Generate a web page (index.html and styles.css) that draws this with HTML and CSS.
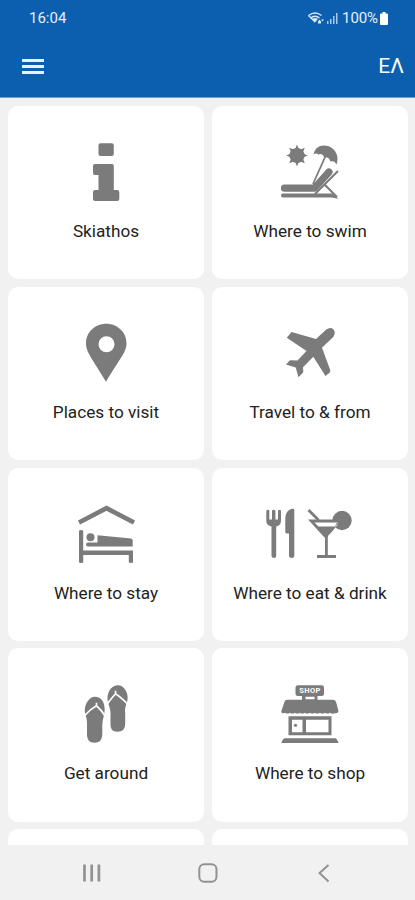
FILE: index.html
```html
<!DOCTYPE html>
<html lang="en">
<head>
<meta charset="utf-8">
<title>Skiathos</title>
<link rel="stylesheet" href="styles.css">
</head>
<body>
<div class="phone">
  <header class="header">
    <div class="status">
      <span class="time">16:04</span>
      <span class="indicators">
        <svg class="signal" viewBox="306 9 32 16">
          <g fill="none" stroke="#dbe9f8" stroke-width="1.300"><path d="M307.500 14.500Q314 9.500 320.500 14.500M309.500 17Q314 13.500 318.500 17"/><path d="M307.500 14.500L314 21"/></g>
          <path d="M311 18Q314 16 317 18L314 21.500Z" fill="#dbe9f8"/>
          <path d="M317 20.500l1.500-2 1.500 2v2h-3zM320 18.500h3l-1.500 2z" fill="#dbe9f8"/>
          <path d="M326 20h1.500v3H326zM329 18h1.500v5H329zM332 15h1.500v8H332zM335 12h1.500v11H335z" fill="#a9c9eb"/>
        </svg>
        <span class="percent">100%</span>
        <svg class="battery" viewBox="0 0 8 13"><path d="M2.500 0h3v1.500H7q1 0 1 1V12q0 1-1 1H1q-1 0-1-1V2.500q0-1 1-1h1.500z" fill="#fff"/></svg>
      </span>
    </div>
    <nav class="toolbar">
      <span class="menu"><i></i><i></i><i></i></span>
      <span class="language">ΕΛ</span>
    </nav>
  </header>

  <main class="grid">
    <section class="card">
      <svg class="icon" viewBox="58 140 96 64"><rect x="98.500" y="143.300" width="15.300" height="12.700" rx="2"/><path d="M95 164H112Q113.800 164 113.800 166V190H117Q119.300 190 119.300 192.200V199Q119.300 201 117.300 201H95Q93 201 93 199V192Q93 190 95 190H98.500V175H95Q93 175 93 173V166Q93 164 95 164Z"/></svg>
      <span class="label">Skiathos</span>
    </section>
    <section class="card">
      <svg class="icon" viewBox="262 140 96 64">
        <circle cx="297" cy="155.500" r="7.600"/>
        <path d="M297 144.500l2 5h-4zM297 166.500l-2-5h4zM286.200 155.500l5-2v4zM307.800 155.500l-5 2v-4zM289.200 147.800l5 2-3 3zM304.800 147.800l-2 5-3-3zM289.200 163.200l2-5 3 3zM304.800 163.200l-5-2 3-3z"/>
        <path d="M313.500 154.500C315 147 321 144 328 146C336 148.500 339.500 157 336.500 164.500Q334.500 160 330.500 161.500Q328.500 156.500 324.500 157.500Q322 152.500 318.500 154.500Q315.500 152.500 313.500 154.500Z"/>
        <path class="line" stroke-width="1.800" d="M326 155L313 184"/>
        <path class="line" stroke-width="7.200" stroke-linecap="round" stroke-linejoin="round" d="M284.500 188.200H314.500L329 172"/>
        <path class="line" stroke-width="2" d="M338 171L315 194M324.500 184.500L337 197"/>
        <path d="M283 193.500H332L338.500 199L332 197.500H283Q281 197.500 281 195.500T283 193.500Z"/>
      </svg>
      <span class="label">Where to swim</span>
    </section>
    <section class="card">
      <svg class="icon" viewBox="58 320.750 96 64"><path fill-rule="evenodd" d="M106.300 323.500C117.500 323.500 126.500 332 126.500 343C126.500 352 120 358 106 381.500C92 358 86 352 86 343C86 332 95 323.500 106.300 323.500ZM106.500 336A8 8 0 1 0 106.500 352A8 8 0 1 0 106.500 336Z"/></svg>
      <span class="label">Places to visit</span>
    </section>
    <section class="card">
      <svg class="icon" viewBox="262 320.750 96 64"><path d="M326 329.500Q330.500 326.500 333.300 329T333.500 336.500L322 347.500L330.300 370Q330.600 371.500 329.500 372.500L325.500 375.800L313.300 356.500L303 367L303.300 372L298.500 377L295.700 367.300L286 364.200L290 359.900L297.500 360.200L306.500 350.700L286.800 337.500L291.500 331.700L316 338.700Z"/></svg>
      <span class="label">Travel to &amp; from</span>
    </section>
    <section class="card">
      <svg class="icon" viewBox="58 501.500 96 64"><path class="line" stroke-width="4.700" d="M79 522L106.500 507.700L134 522"/><path d="M79 530.500Q79 529.500 81 529.500T83.200 530.500V550H133V561.500Q133 562.500 131 562.500T128.800 561.500V554.500H83.200V561.500Q83.200 562.500 81 562.500T79 561.500Z"/><circle cx="90.500" cy="536.700" r="4"/><path d="M97.500 534.700L131 538Q132.700 538.300 132.700 540V546H88Q86 546 86 544Q86 542 88 542H97.500Z"/></svg>
      <span class="label">Where to stay</span>
    </section>
    <section class="card">
      <svg class="icon" viewBox="262 501.500 96 64">
        <path d="M266.300 510Q267.800 508.500 269.300 510V519H272V510Q273.700 508.500 275.400 510V519H278V510Q279.500 508.500 281 510V520Q281 525 276.200 526V555.500Q276.200 557.500 274 557.500T271.500 555.500V526Q266.300 525 266.300 520Z"/>
        <path d="M292 508.200H293Q294.300 508.200 294.300 509.500V555.500Q294.300 557.500 291.800 557.500T289 555.500V533H286.500Q285.300 533 285.300 531V518Q285.300 510 292 508.200Z"/>
        <circle cx="342" cy="520" r="9.700"/>
        <path fill="#fff" d="M310 521H338L337 525L327 537L310 523Z"/>
        <path fill-rule="evenodd" d="M308 519H339Q336 528 328.300 535L327.800 537V554.500H336V557.500H317V554.500H325V537.500ZM314.500 522L318.500 526H335L337 522Z"/>
        <path class="line" stroke-width="2.800" d="M308.500 509.500L318.500 519.500"/>
      </svg>
      <span class="label">Where to eat &amp; drink</span>
    </section>
    <section class="card">
      <svg class="icon" viewBox="58 682.250 96 64">
        <path d="M118 685.500C124 685.500 128.500 693 127.500 700C126.800 704.500 124.500 707 125.200 713V724Q125.200 732 117.500 732T110.500 724V714C110.700 708 107.500 704 107.500 699C107.500 691 112 685.500 118 685.500Z"/>
        <path class="strap" d="M107 704.500Q111.500 698.500 115.500 694Q121 697.500 127.700 704.500M115.500 694V691"/>
        <path d="M95 697C89 697 84.500 704.500 84.800 711.500C85.300 716 87.200 718 87 724.500V735Q87 743 94.500 743T102.300 735V725C102.500 719 104.700 715 104.700 710C104.700 702 101 697 95 697Z"/>
        <path class="strap" d="M84.500 716Q90 709.500 96.500 706Q101 710 105 716M96.500 706V703"/>
      </svg>
      <span class="label">Get around</span>
    </section>
    <section class="card">
      <svg class="icon" viewBox="262 682.250 96 64">
        <path d="M298 685.500H321.500Q324 685.500 324 688V693.800Q324 696.300 321.500 696.300H317.500V700H333Q335 700 336 702L338.500 711.500Q338 714 335 713.500Q332 714.500 330 713Q327 714.700 325 713Q322 714.700 320 713Q317 714.700 315 713Q312 714.700 310 713Q307 714.700 305 713Q302 714.700 300 713Q297 714.700 295 713Q292 714.700 290 713Q287 714.700 285 713Q281 714.500 281.300 711.500L284.500 702Q285 700 287 700H302V696.300H298Q295.500 696.300 295.500 693.800V688Q295.500 685.500 298 685.500Z"/>
        <path fill="#fff" d="M305.500 697H314.500V699.500H305.500Z"/>
        <text class="sign" x="310" y="693.700" text-anchor="middle">SHOP</text>
        <path fill-rule="evenodd" d="M288.500 716.500H331.500V735.500H288.500ZM292 720V732.500H302.500V720ZM306 720V732.500H328.500V720Z"/>
        <circle cx="295.500" cy="725.500" r="1.600"/>
        <path d="M285 738.500H335Q337 738.500 338.500 743.200H281.300Q283 738.500 285 738.500Z"/>
      </svg>
      <span class="label">Where to shop</span>
    </section>
    <section class="card"></section>
    <section class="card"></section>
  </main>

  <footer class="navbar">
    <svg viewBox="0 0 24 24"><path d="M4.500 3.500V20.500M11.700 3.500V20.500M18.900 3.500V20.500" stroke-width="2.700"/></svg>
    <svg viewBox="0 0 24 24"><rect x="3.300" y="3.300" width="17.200" height="17.400" rx="5" stroke-width="2"/></svg>
    <svg viewBox="0 0 24 24"><path d="M17.500 4L8.500 12L17.500 20.500" stroke-width="2"/></svg>
  </footer>
</div>
</body>
</html>
```
FILE: styles.css
```css
* { box-sizing: border-box; }
body { margin: 0; background: #f1f1f1; font-family: Roboto, "Liberation Sans", sans-serif; }
.phone { width: 415px; height: 900px; display: flex; flex-direction: column; overflow: hidden; }
.header { flex: none; height: 98px; background: #0c5eaf; color: #fff; border-bottom: 1px solid #6c9dce; }
.status { height: 36px; padding: 0 27px 0 29px; display: flex; align-items: center; justify-content: space-between; font-size: 15px; color: #e6f0fa; }
.indicators { display: flex; align-items: center; }
.signal { width: 32px; height: 16px; margin-right: 3px; }
.percent { letter-spacing: -0.1px; margin-right: 2px; }
.battery { width: 8px; height: 13px; }
.toolbar { height: 60px; padding: 0 11px 0 22px; display: flex; align-items: center; justify-content: space-between; }
.menu { width: 22px; display: flex; flex-direction: column; gap: 3px; }
.menu i { height: 3px; background: #e9f1fa; }
.language { font-size: 21px; line-height: 24px; }
.grid { flex: 1; min-height: 0; overflow: hidden; padding: 8px 7px 0 8px; display: grid; grid-template-columns: 196px 196px; grid-auto-rows: 173.25px; column-gap: 8px; row-gap: 7.5px; }
.card { background: #fff; border-radius: 10px; padding-top: 34px; display: flex; flex-direction: column; align-items: center; }
.icon { flex: none; width: 96px; height: 64px; fill: #7b7b7b; }
.line { fill: none; stroke: #7b7b7b; }
.strap { fill: none; stroke: #fff; stroke-width: 1.7; }
.sign { fill: #fff; font-size: 7.5px; font-weight: 700; letter-spacing: 0.4px; }
.label { margin-top: 16px; font-size: 17.2px; line-height: 22px; color: #222; white-space: nowrap; }
.navbar { flex: none; height: 55px; padding: 0 80px; display: flex; align-items: center; justify-content: space-between; background: #f1f1f1; }
.navbar svg { width: 24px; height: 24px; fill: none; stroke: #929292; }
```
